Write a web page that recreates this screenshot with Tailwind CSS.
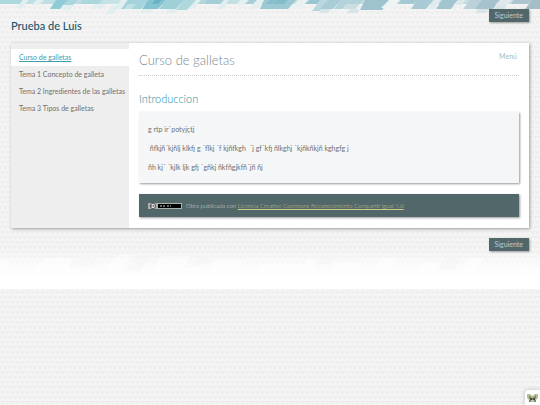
<!DOCTYPE html>
<html lang="es">
<head>
    <meta charset="UTF-8">
    <meta name="viewport" content="width=device-width, initial-scale=1.0">
    <title>Curso de galletas | Prueba de Luis</title>
    <script src="https://cdn.jsdelivr.net/npm/@tailwindcss/browser@4"></script>
</head>
<body class="relative min-h-screen bg-[#f4f4f4] font-['Lato',sans-serif] text-[7px] text-[#707070]">
    <!-- Background -->
    <svg class="absolute inset-0 w-full h-full" aria-hidden="true">
        <defs>
            <pattern id="triangles" width="5" height="10" patternUnits="userSpaceOnUse">
                <path d="M0 1h5l-2.5 4z" fill="#eeeeee" />
                <path d="M-2.5 6h5l-2.5 4zM2.5 6h5l-2.5 4z" fill="#eeeeee" />
            </pattern>
            <linearGradient id="fade" x1="0" y1="0" x2="0" y2="1">
                <stop offset="0" stop-color="#fff" stop-opacity="0" />
                <stop offset=".65" stop-color="#fff" stop-opacity=".75" />
                <stop offset="1" stop-color="#fff" />
            </linearGradient>
        </defs>
        <rect width="100%" height="100%" fill="url(#triangles)" />
        <!-- Top stripes -->
        <rect width="100%" height="4" fill="#c0dde2" />
        <path d="M0 0h23l-3 4H0z" fill="#abd9de" />
        <path d="M23 0h6l-7 8h-6zM36 0h8l-4 5h-8zM121 0h7l-8 9h-7z" fill="#e2eff0" />
        <path d="M30 0h6l-4 4h-6zM44 0h9l-4 4h-9z" fill="#bce0e3" />
        <path d="M56 0h12l-8 9H50z" fill="#8fcbd6" />
        <path d="M68 0h10l-5 5h-9zM82 0h20l-4 4H80z" fill="#a9d7dd" />
        <path d="M62 5h12l-4 5h-9zM94 4h12l-4 5H91zM112 5h8l-7 9h-8z" fill="#dcedef" opacity=".7" />
        <path d="M104 0h16l-4 4h-15z" fill="#c5e3e7" />
        <path d="M128 0h20l-7 9h-20z" fill="#a3d3dc" />
        <path d="M128 4h8l-4 5h-8z" fill="#bfe0e5" />
        <path d="M148 0h18l-8 9h-16z" fill="#84c4d1" />
        <path d="M155 0h7l-4 4h-6z" fill="#65b3c5" />
        <path d="M166 0h18l-8 9h-17z" fill="#9fd0d8" />
        <path d="M142 9h12l-4 4h-10zM168 9h10l-4 4h-8z" fill="#dcebed" opacity=".6" />
        <path d="M184 0h12l-9 10h-11zM200 0h7l-4 4h-8z" fill="#b0d7dd" />
        <path d="M207 0h17l-4 4h-16z" fill="#a4cfd8" />
        <path d="M196 0h5l-8 9h-5zM224 0h5l-6 9h-7z" fill="#e0eeef" />
        <path d="M230 0h11l-4 4h-10z" fill="#c4dfe3" />
        <path d="M240 0h9l-4 5h-9zM255 0h10l-8 9h-7z" fill="#e5eff0" />
        <path d="M249 0h8l-4 4h-8z" fill="#a7ced6" />
        <path d="M264 0h32l-8 9h-28z" fill="#9cc9d3" />
        <path d="M276 0h12l-4 4h-12zM270 0h5l-4 4h-5z" fill="#83bdca" />
        <path d="M298 0h10l-8 9h-10z" fill="#eaf1f2" />
        <path d="M310 0h11l-4 4h-12z" fill="#99c5d0" />
        <path d="M320 0h8l-8 11h-8z" fill="#b8d7de" />
        <path d="M328 0h13l-8 9h-13z" fill="#a8cdd6" />
        <path d="M341 0h22l-8 9h-21z" fill="#b3d3db" />
        <path d="M365 0h25l-8 10h-22z" fill="#9fc3ce" />
        <path d="M346 4h14l-4 5h-14zM350 9h10l-3 4h-10zM322 9h9l-3 4h-9z" fill="#cfe1e6" opacity=".8" />
        <path d="M389 0h11l-7 8h-12z" fill="#eef3f4" />
        <path d="M401 0h16l-4 4h-15z" fill="#a4c9d2" />
        <path d="M417 0h16l-7 9h-15z" fill="#a9cad4" />
        <path d="M434 0h7l-7 9h-7z" fill="#e0ebed" />
        <path d="M442 0h16l-7 9h-15z" fill="#a2c5cf" />
        <path d="M458 0h8l-4 5h-9z" fill="#dce8eb" />
        <path d="M470 0h14l-7 9h-14z" fill="#bcd2da" />
        <path d="M482 0h18l-7 9h-18z" fill="#a6c2cc" />
        <path d="M478 9h11l-3 4h-11zM498 4h10l-4 5h-10z" fill="#d5e1e5" opacity=".8" />
        <path d="M500 0h12l-5 5h-12z" fill="#dfe8eb" />
        <path d="M514 0h18l-4 4h-17z" fill="#acc4cd" />
        <path d="M532 0h8v9h-15z" fill="#a5bdc6" />
        <!-- White band -->
        <rect y="247" width="100%" height="32" fill="url(#fade)" />
        <rect y="276" width="100%" height="13" fill="#fff" />
        <path d="M0 260h10l-3 9H0zM45 258h28l-5 12h16l-8 9H24zM118 255h15l-14 15h-16zM160 256h30l-6 12h18l-9 9h-43zM215 260h28l-7 13h-30zM262 264h48l-3 10h-52zM308 260h12l-10 14h-16zM335 262h27l-7 13h-27zM381 258h17l-14 17h-14zM422 262h20l-7 12h-22zM470 258h15l-12 16h-13zM515 267h25v10h-32z" fill="#fff" opacity=".45" />
        <path d="M75 258h22l-5 8H70zM137 256h15l-12 15h-14zM200 255h14l-8 10h-13zM320 256h17l-7 9h-17zM445 256h18l-9 14h-15z" fill="#f4f4f4" opacity=".45" />
    </svg>

    <div class="relative px-[11px]">
        <header class="flex justify-between h-[43px]">
            <h1 class="pt-[18px] text-[11px] leading-4 text-[#1b566b] font-medium">Prueba de Luis</h1>
            <nav class="pt-[9px]">
                <a href="#" class="block px-[6px] text-[7px] leading-[13px] bg-[#52676a] text-[#c0cacb] shadow-[1px_1px_2px_#999]">Siguiente</a>
            </nav>
        </header>

        <div class="flex bg-white shadow-[1px_1px_3px_#999]">
            <!-- Sidebar -->
            <nav class="w-[118px] shrink-0 bg-[#eeeeee] pt-[6px]">
                <ul class="leading-[17px] whitespace-nowrap">
                    <li class="bg-white"><a href="#" class="block px-2 text-[#409dae] underline">Curso de galletas</a></li>
                    <li><a href="#" class="block px-2">Tema 1 Concepto de galleta</a></li>
                    <li><a href="#" class="block px-2">Tema 2 Ingredientes de las galletas</a></li>
                    <li><a href="#" class="block px-2">Tema 3 Tipos de galletas</a></li>
                </ul>
            </nav>

            <!-- Content -->
            <main class="flex-1 px-[10px] pb-[11px]">
                <div class="flex justify-between h-[33px] border-b border-dotted border-[#cccccc]">
                    <h2 class="pt-[7px] text-[13px] leading-5 font-light text-[#7c898c]">Curso de galletas</h2>
                    <a href="#" class="pt-[7px] pr-[2px] leading-3 text-[#a5c0bc]">Menú</a>
                </div>
                <h3 class="pt-[15px] text-[11px] leading-4 font-light text-[#2b8ca0]">Introduccion</h3>
                <div class="mt-[5px] px-[9px] pt-[11px] pb-[10px] space-y-[7px] leading-3 bg-[#f5f6f8] shadow-[1px_1px_2px_#999]">
                    <p>g rtp ir`potyjçtj</p>
                    <p>&nbsp;ñfkjñ´kjñlj klkfj g ´flkj ´f kjñfkgh&nbsp; ´j gf´kfj ñlkghj ´kjñkñkjñ kghgfg j</p>
                    <p>ñh kj´ ´kjlk ljk gfj ´gñkj ñkfñgjkfñ´jñ ñj</p>
                </div>
                <footer class="mt-[11px] px-[9px] flex items-center gap-1 h-[23px] text-[6px] font-light bg-[#52676a] text-[#d5dcdd] shadow-[1px_1px_2px_#999]">
                    <svg class="w-[34px] h-[6px]" viewBox="0 0 34 6" role="img" aria-label="Creative Commons BY-SA">
                        <rect width="34" height="6" fill="#aab2ab" />
                        <rect x="10" y="1" width="23" height="4" fill="#000" />
                        <circle cx="5" cy="3" r="2.7" fill="#fff" stroke="#222" stroke-width=".7" />
                        <path d="M4.6 2.2a1 1 0 1 0 0 1.6M6.7 2.2a1 1 0 1 0 0 1.6" fill="none" stroke="#111" stroke-width=".6" />
                        <path d="M12 3h2M15 3h2M19 3h2M22 3h1" stroke="#ccc" />
                    </svg>
                    <p>Obra publicada con <a href="#" class="text-[#d0ca85] underline">Licencia Creative Commons Reconocimiento Compartir igual 4.0</a></p>
                </footer>
            </main>
        </div>

        <nav class="flex justify-end pt-[10px]">
            <a href="#" class="block px-[6px] text-[7px] leading-[13px] bg-[#52676a] text-[#c0cacb] shadow-[1px_1px_2px_#999]">Siguiente</a>
        </nav>
    </div>

    <!-- Corner badge -->
    <a href="#" aria-label="eXeLearning" class="fixed right-0 bottom-0 pt-[3px] pb-[2px] px-[2px] bg-white rounded-tl-sm shadow-[0_0_4px_#bbb]">
        <svg class="w-[11px] h-[10px]" viewBox="0 0 11 10">
            <path d="M0 1l3 0 2.500 2L8 1h3v4L9 7v2H2V7L0 5z" fill="#b7bf97" />
            <path d="M2 2l3 3 1 0 3-3v3L7 7h2v2H2V7h2L2 5z" fill="#7d8769" />
            <path d="M3 5h2v2H3zM6 5h2v2H6z" fill="#454c46" />
            <path d="M4 7h3v2H4z" fill="#c1c3b8" />
        </svg>
    </a>
</body>
</html>
